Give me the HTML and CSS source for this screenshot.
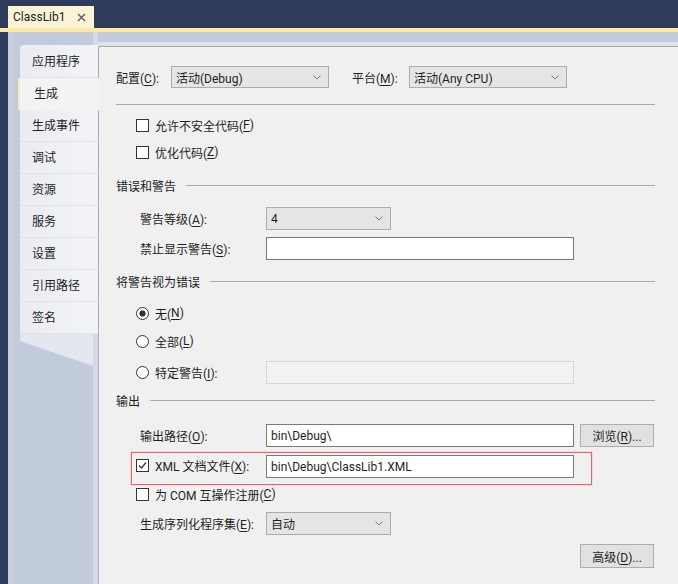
FILE: index.html
```html
<!DOCTYPE html>
<html lang="zh-CN">
<head>
    <meta charset="UTF-8">
    <title>ClassLib1 - 生成</title>
    <link rel="stylesheet" href="styles.css">
</head>
<body>
    <div class="titlebar">
        <div class="doc-tab">
            <span>ClassLib1</span>
            <svg class="close" viewBox="0 0 9 9"><path d="M1 1L8 8M8 1L1 8"/></svg>
        </div>
    </div>
    <div class="accent"></div>

    <div class="frame">
        <div class="side">
            <ul class="tabs">
                <li class="first">应用程序</li>
                <li class="active">生成</li>
                <li>生成事件</li>
                <li>调试</li>
                <li>资源</li>
                <li>服务</li>
                <li>设置</li>
                <li>引用路径</li>
                <li>签名</li>
            </ul>
            <div class="tab-tail"></div>
        </div>

        <div class="content">
            <div class="row top">
                <span class="lbl-config">配置(<u>C</u>):</span>
                <div class="select wide">
                    <span>活动(Debug)</span>
                    <svg class="chev" viewBox="0 0 8 5"><polyline points="0.5,0.5 4,4 7.5,0.5"/></svg>
                </div>
                <span class="lbl-platform">平台(<u>M</u>):</span>
                <div class="select wide">
                    <span>活动(Any CPU)</span>
                    <svg class="chev" viewBox="0 0 8 5"><polyline points="0.5,0.5 4,4 7.5,0.5"/></svg>
                </div>
            </div>
            <div class="rule"></div>

            <div class="check first-check"><span class="box"></span>允许不安全代码(<u>F</u>)</div>
            <div class="check second-check"><span class="box"></span>优化代码(<u>Z</u>)</div>

            <div class="section sec-errors">错误和警告</div>
            <div class="field warn-level">
                <span class="lbl">警告等级(<u>A</u>):</span>
                <div class="select short">
                    <span>4</span>
                    <svg class="chev" viewBox="0 0 8 5"><polyline points="0.5,0.5 4,4 7.5,0.5"/></svg>
                </div>
            </div>
            <div class="field suppress">
                <span class="lbl">禁止显示警告(<u>S</u>):</span>
                <div class="input"></div>
            </div>

            <div class="section sec-treat">将警告视为错误</div>
            <div class="check radio-none"><span class="radio on"></span>无(<u>N</u>)</div>
            <div class="check radio-all"><span class="radio"></span>全部(<u>L</u>)</div>
            <div class="check radio-some">
                <span class="radio"></span><span class="radio-lbl">特定警告(<u>I</u>):</span>
                <div class="input disabled"></div>
            </div>

            <div class="section sec-output">输出</div>
            <div class="field out-path">
                <span class="lbl">输出路径(<u>O</u>):</span>
                <div class="input">bin\Debug\</div>
                <button class="btn browse">浏览(<u>R</u>)...</button>
            </div>
            <div class="highlight">
                <span class="box checked">
                    <svg viewBox="0 0 11 11"><polyline points="2,5.5 4.5,8 9,2.5"/></svg>
                </span>
                <span class="xml-lbl">XML 文档文件(<u>X</u>):</span>
                <div class="input">bin\Debug\ClassLib1.XML</div>
            </div>
            <div class="check com-check"><span class="box"></span>为 COM 互操作注册(<u>C</u>)</div>
            <div class="field serialize">
                <span class="lbl">生成序列化程序集(<u>E</u>):</span>
                <div class="select short">
                    <span>自动</span>
                    <svg class="chev" viewBox="0 0 8 5"><polyline points="0.5,0.5 4,4 7.5,0.5"/></svg>
                </div>
            </div>
            <div class="actions">
                <button class="btn">高级(<u>D</u>)...</button>
            </div>
        </div>
    </div>
</body>
</html>
```

FILE: styles.css
```css
* {
    box-sizing: border-box;
}
html, body {
    margin: 0;
    height: 100%;
}
body {
    background-color: #2e3c5a;
    font-family: Roboto, "Noto Sans CJK SC", sans-serif;
    font-size: 12px;
    color: #1e1e1e;
    overflow: hidden;
}
u {
    text-decoration: underline;
    text-underline-offset: 2px;
}

/* document tab */
.titlebar {
    height: 28px;
    padding: 6px 0 0 8px;
}
.doc-tab {
    width: 86px;
    height: 22px;
    background-color: #fbf3d6;
    display: flex;
    align-items: center;
    padding-left: 5px;
}
.close {
    width: 9px;
    height: 9px;
    margin-left: 11px;
    stroke: #5a5a5a;
    stroke-width: 1.4;
    fill: none;
}
.accent {
    height: 4px;
    background-color: #fde7a5;
}

/* page frame */
.frame {
    display: flex;
    height: 552px;
    margin-left: 8px;
    background-color: #c1cbdb;
    border-left: 5px solid #c8d0de;
}
.side {
    width: 85px;
    padding: 13px 0 0 7px;
    border-right: 5px solid #d4d9e3;
}
.tabs {
    list-style: none;
    margin: 0 -5px 0 0;
    padding: 0;
}
.tabs li {
    height: 32px;
    line-height: 32px;
    padding-left: 12px;
    background: linear-gradient(to right, #eaecf1, #f3f4f7);
    border-bottom: 1px solid #dfe2e9;
}
.tabs li.first {
    height: 33px;
    line-height: 35px;
    border-top-left-radius: 4px;
}
.tabs li.active {
    position: relative;
    z-index: 1;
    margin: 0 -1px 0 -2px;
    padding-left: 14px;
    background: #f3f3f3;
    border-left: 2px solid #f6ecc6;
    border-bottom-color: #f3f3f3;
}
.tab-tail {
    height: 32px;
    background-color: #e4e7ee;
    clip-path: polygon(0 0, 100% 0, 100% 100%, 0 22%);
}

/* settings panel */
.content {
    flex: 1;
    margin-top: 14px;
    padding: 0 23px 0 17px;
    background-color: #f0f0f0;
    border-top: 1px solid #a8a8a8;
    border-left: 1px solid #a9aec0;
    box-shadow: 0 -4px 0 #dde2ea;
}
.row {
    display: flex;
    align-items: center;
}
.row.top {
    margin-top: 19px;
    height: 22px;
}
.lbl-config {
    width: 55px;
}
.lbl-platform {
    width: 57px;
    margin-left: 23px;
}
.select {
    height: 23px;
    display: flex;
    align-items: center;
    justify-content: space-between;
    padding: 0 7px 0 4px;
    background-color: #e5e5e5;
    border: 1px solid #acacac;
}
.select.wide {
    width: 158px;
    height: 22px;
}
.select.short {
    width: 125px;
}
.chev {
    width: 8px;
    height: 5px;
    fill: none;
    stroke: #7a7a7a;
    stroke-width: 1;
}
.rule {
    margin-top: 16px;
    border-top: 1px solid #a9a9a9;
}

/* checkboxes and radios */
.check {
    display: flex;
    align-items: center;
    height: 18px;
    padding-left: 20px;
}
.box, .radio {
    flex: none;
    width: 13px;
    height: 13px;
    margin-right: 6px;
    background-color: #fff;
    border: 1px solid #333;
}
.radio {
    border-radius: 50%;
}
.radio.on {
    background: radial-gradient(circle, #333 0 2.8px, #fff 3.4px);
}
.box.checked svg {
    display: block;
    width: 11px;
    height: 11px;
    fill: none;
    stroke: #333;
    stroke-width: 1.3;
}
.first-check { margin-top: 11px; }
.second-check { margin-top: 9px; }

/* group headings */
.section {
    display: flex;
    align-items: center;
    gap: 10px;
    height: 18px;
}
.section::after {
    content: "";
    flex: 1;
    border-top: 1px solid #a9a9a9;
}
.sec-errors { margin-top: 15px; }
.sec-treat { margin-top: 12px; }
.sec-output { margin-top: 7px; }

/* label + control rows */
.field {
    display: flex;
    align-items: center;
    height: 23px;
    padding-left: 24px;
}
.field .lbl {
    width: 126px;
}
.input {
    width: 308px;
    height: 23px;
    display: flex;
    align-items: center;
    padding: 0 4px;
    background-color: #fff;
    border: 1px solid #7a7a7a;
}
.input.disabled {
    background-color: #f2f2f2;
    border-color: #d5d5d5;
}
.warn-level { margin-top: 13px; }
.suppress { margin-top: 7px; }
.radio-none { margin-top: 14px; }
.radio-all { margin-top: 10px; }
.radio-some {
    margin-top: 11px;
    height: 23px;
}
.radio-lbl {
    width: 111px;
}
.out-path { margin-top: 15px; }

.btn {
    width: 74px;
    height: 24px;
    padding: 0;
    font: inherit;
    color: #1e1e1e;
    background-color: #e1e1e1;
    border: 1px solid #adadad;
}
.browse {
    margin-left: 6px;
    height: 23px;
}

.highlight {
    display: flex;
    align-items: center;
    width: 461px;
    height: 33px;
    margin: 5px 0 0 15px;
    padding: 0 0 6px 4px;
    border: 1px solid #e2636f;
    box-shadow: 0 0 0 1px #f7d9dc;
}
.highlight .input {
    margin-top: 2px;
}
.xml-lbl {
    width: 111px;
}
.com-check { margin-top: 0; }
.serialize { margin-top: 9px; }
.actions {
    display: flex;
    justify-content: flex-end;
    margin-top: 9px;
    padding-right: 1px;
}
```
